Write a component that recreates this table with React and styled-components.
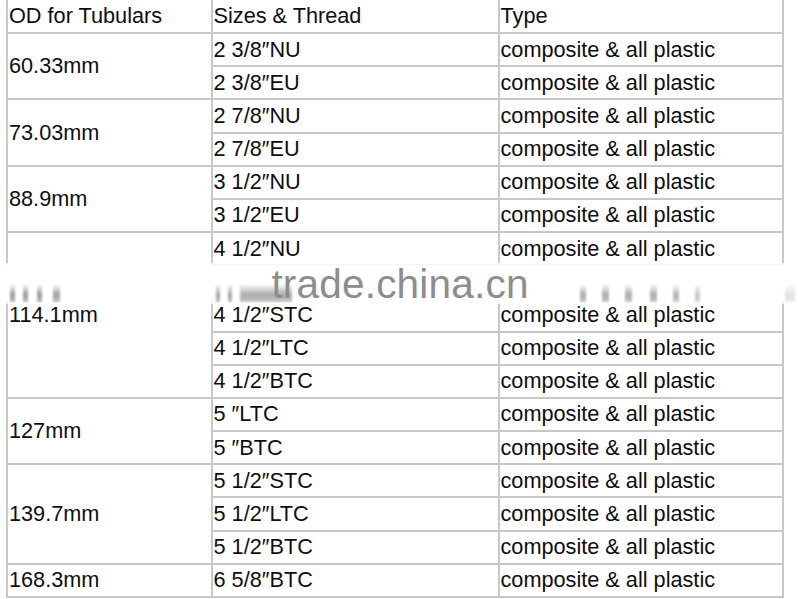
import React from "react";
import styled, { createGlobalStyle } from "styled-components";

const Global = createGlobalStyle`
  html, body { margin: 0; padding: 0; background: #fff; }
  body { font-family: "Liberation Sans", Arial, sans-serif; overflow: hidden; }
`;

const Page = styled.div`
  position: relative;
  width: 800px;
  height: 599px;
  overflow: hidden;
  background: #fff;
`;

const Grid = styled.div`
  display: grid;
  margin-left: 6px;
  width: 778px;
  grid-template-columns: 204.5px 287px 1fr;
  grid-template-rows: 34px repeat(17, 33.18px);
  border-left: 2px solid #c8c8c8;
  box-sizing: border-box;
`;

const Cell = styled.div`
  box-sizing: border-box;
  display: flex;
  align-items: center;
  padding-left: 1px;
  border-right: 2px solid #c8c8c8;
  border-bottom: 2px solid #c8c8c8;
  font-size: 21.7px;
  color: #0e0e0e;
  white-space: nowrap;
  grid-row: ${(p) => (p.$span ? `span ${p.$span}` : "auto")};
  grid-column: ${(p) => p.$col};
`;

const Band = styled.div`
  position: absolute;
  left: 0;
  right: 0;
  top: 263px;
  height: 41px;
  background: linear-gradient(
    to bottom,
    rgba(255, 255, 255, 0.6) 0px,
    #fff 3px,
    #fff 38px,
    rgba(255, 255, 255, 0.6) 41px
  );
  display: flex;
  justify-content: center;
  padding-top: 1px;
  box-sizing: border-box;
`;

const Streak = styled.div`
  position: absolute;
  top: 21px;
  height: 18px;
  background: linear-gradient(
    to bottom,
    rgba(50, 50, 50, 0) 0%,
    rgba(50, 50, 50, 0.9) 60%,
    rgba(50, 50, 50, 0.6) 100%
  );
  filter: blur(1.3px);
`;

const Watermark = styled.span`
  position: relative;
  font-family: "Liberation Sans", Arial, sans-serif;
  font-size: 40.5px;
  line-height: 40px;
  height: 40px;
  color: #8d8d8d;
  letter-spacing: 0.2px;
`;

const groups = [
  { od: "60.33mm", sizes: ["2 3/8″NU", "2 3/8″EU"] },
  { od: "73.03mm", sizes: ["2 7/8″NU", "2 7/8″EU"] },
  { od: "88.9mm", sizes: ["3 1/2″NU", "3 1/2″EU"] },
  {
    od: "114.1mm",
    sizes: ["4 1/2″NU", "", "4 1/2″STC", "4 1/2″LTC", "4 1/2″BTC"],
  },
  { od: "127mm", sizes: ["5 ″LTC", "5 ″BTC"] },
  { od: "139.7mm", sizes: ["5 1/2″STC", "5 1/2″LTC", "5 1/2″BTC"] },
  { od: "168.3mm", sizes: ["6 5/8″BTC"] },
];

const streaks = [
  [10, 5, 0.55],
  [23, 5, 0.55],
  [37, 5, 0.55],
  [53, 7, 0.5],
  [216, 4, 0.5],
  [228, 4, 0.5],
  [240, 52, 0.45],
  [580, 6, 0.45],
  [602, 7, 0.45],
  [625, 7, 0.45],
  [650, 7, 0.45],
  [673, 6, 0.4],
  [695, 5, 0.3],
  [785, 10, 0.15],
];

export default function App() {
  return (
    <Page>
      <Global />
      <Grid>
        <Cell $col={1}>OD for Tubulars</Cell>
        <Cell $col={2}>Sizes &amp; Thread</Cell>
        <Cell $col={3}>Type</Cell>
        {groups.map((g) => (
          <React.Fragment key={g.od}>
            <Cell $col={1} $span={g.sizes.length}>
              {g.od}
            </Cell>
            {g.sizes.map((s, i) => (
              <React.Fragment key={i}>
                <Cell $col={2}>{s}</Cell>
                <Cell $col={3}>{s ? "composite & all plastic" : ""}</Cell>
              </React.Fragment>
            ))}
          </React.Fragment>
        ))}
      </Grid>
      <Band>
        {streaks.map(([l, w, o]) => (
          <Streak key={l} style={{ left: l, width: w, opacity: o }} />
        ))}
        <Watermark>trade.china.cn</Watermark>
      </Band>
    </Page>
  );
}
